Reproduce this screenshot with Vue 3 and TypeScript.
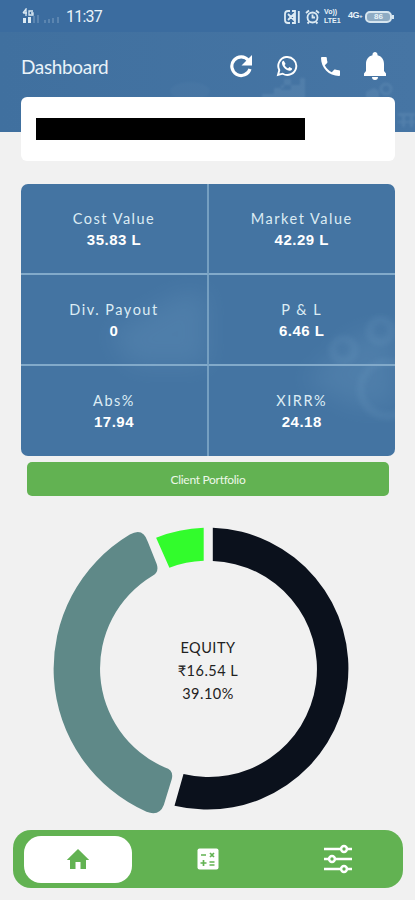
<script setup lang="ts">
interface Metric {
  label: string
  value: string
}

const metrics: Metric[] = [
  { label: 'Cost Value', value: '35.83 L' },
  { label: 'Market Value', value: '42.29 L' },
  { label: 'Div. Payout', value: '0' },
  { label: 'P & L', value: '6.46 L' },
  { label: 'Abs%', value: '17.94' },
  { label: 'XIRR%', value: '24.18' },
]
</script>

<template>
  <main class="screen">
    <header class="hero">
      <svg class="hero-art" viewBox="0 0 415 132" aria-hidden="true">
        <defs><filter id="hero-soft"><feGaussianBlur stdDeviation="1" /></filter></defs>
        <g fill="#83a9c9" opacity=".2" filter="url(#hero-soft)">
          <path d="M262 94h12v-6h10v-9h7v6h9v-7h5v26h-43zM281 85h10v5h-10z" fill-rule="evenodd" />
          <path d="M366 98v-6l8-4 5 3v7zM398 113h17v3h-17zM402 113h3v14h-3zM410 113h3v14h-3zM398 121h17v2h-17z" />
          <circle cx="386" cy="89" r="5" fill="none" stroke="#83a9c9" stroke-width="3" />
          <ellipse cx="190" cy="91" rx="20" ry="9" opacity=".3" />
        </g>
      </svg>
      <div class="status">
        <div class="status-left">
          <svg width="42" height="17" viewBox="0 0 42 17" fill="#dceaf3">
            <path d="M1 5l3-4v7M1 5h4M11 3H7v4h4V5H9" fill="none" stroke="#dceaf3" stroke-width="1.3" />
            <path d="M1 10h3v5H1zM6 9h3v6H6z" />
            <path d="M11 8h2v7h-2zM15 7h2v8h-2zM22 12h2v3h-2zM26 11h2v4h-2zM30 10h2v5h-2zM35 9h2v6h-2z" opacity=".2" />
          </svg>
          <span class="clock">11:37</span>
        </div>
        <div class="status-right">
          <svg width="17" height="16" viewBox="0 0 17 16" fill="none" stroke="#dceaf3" stroke-width="1.800">
            <path d="M6 2H4Q1 2 1 5v6q0 3 3 3h2M4 5l6 6V5L4 11M8 2h3v12H8M14.800 2v12" />
          </svg>
          <svg width="15" height="16" viewBox="0 0 15 16" fill="none" stroke="#dceaf3" stroke-width="1.800">
            <circle cx="7.500" cy="8.500" r="5" /><path d="M1 4l3-2.500M14 4l-3-2.500M7.500 5.500v3h2.500M4 13l-1.500 1.500M11 13l1.500 1.500" />
          </svg>
          <span class="volte"><span>Vo))</span><span>LTE1</span></span>
          <span class="network">4G<i>+</i></span>
          <span class="battery">86</span>
        </div>
      </div>
      <div class="toolbar">
        <h1>Dashboard</h1>
        <nav class="actions">
          <svg width="24" height="24" viewBox="0 0 24 24">
            <path d="M19.500 6.500A9.300 9.300 0 1 0 21 15" fill="none" stroke="#fff" stroke-width="3.200" /><path d="M23 1v10.500H12.500z" fill="#fff" />
          </svg>
          <svg width="22" height="22" viewBox="0 0 22 22">
            <path d="M2 20l1.300-4.900A9 9 0 1 1 6.700 18.700z" fill="none" stroke="#fff" stroke-width="1.900" />
            <path d="M7.800 5.700c-.9-.2-2 .8-1.900 2.400.1 3.600 4.500 7.900 8 7.700 1.400-.1 2.500-1.200 2.200-2.300l-2.700-1.400-1.400 1.300c-1.500-.6-2.800-1.800-3.400-3.300l1-1.200z" fill="#fff" />
          </svg>
          <svg width="19" height="19" viewBox="0 0 18 18" fill="#fff">
            <path d="M3.620 7.790c1.440 2.830 3.760 5.140 6.590 6.590l2.200-2.200c.27-.27.670-.36 1.020-.24 1.120.37 2.330.57 3.570.57.550 0 1 .450 1 1V17c0 .550-.450 1-1 1C7.610 18 0 10.390 0 1c0-.550.450-1 1-1h3.500c.550 0 1 .450 1 1 0 1.250.2 2.450.57 3.570.110.350.030.740-.250 1.020z" />
          </svg>
          <svg width="24" height="28" viewBox="0 0 24 28" fill="#fff">
            <path d="M12 28c1.900 0 3-1.100 3-3H9c0 1.900 1.100 3 3 3zM21 19v-7c0-4.800-2.500-7.900-6.500-8.800V2.500C14.500 1 13.300 0 12 0S9.500 1 9.500 2.500v.7C5.500 4.100 3 7.200 3 12v7L1 21.500V24h22v-2.500z" />
          </svg>
        </nav>
      </div>
    </header>

    <section class="client"><div class="redacted"></div></section>

    <section class="metrics">
      <svg class="metrics-art" viewBox="0 0 374 272" preserveAspectRatio="none" aria-hidden="true">
        <defs>
          <filter id="haze" x="-30%" y="-30%" width="160%" height="160%"><feGaussianBlur stdDeviation="12" /></filter>
          <filter id="soft"><feGaussianBlur stdDeviation="2.5" /></filter>
        </defs>
        <g fill="#78a5c9" opacity=".2" filter="url(#haze)">
          <path d="M88 150l70-40 28-2v74H112z" /><path d="M283 197l50-45 41-10v80h-40z" />
        </g>
        <g fill="none" stroke="#78a5c9" stroke-width="8" opacity=".14" filter="url(#soft)">
          <circle cx="367" cy="205" r="27" /><circle cx="360" cy="147" r="11" /><circle cx="323" cy="166" r="11" />
        </g>
      </svg>
      <div v-for="metric in metrics" :key="metric.label" class="metric">
        <span class="metric-label">{{ metric.label }}</span>
        <strong>{{ metric.value }}</strong>
      </div>
    </section>

    <button class="portfolio" type="button">Client Portfolio</button>

    <section class="chart">
      <svg viewBox="39.5 515 330 310" width="330" height="310" aria-hidden="true">
        <path fill="#0b111c" d="M212.300 527.700A141 141 0 1 1 174 805.700L183 774A108.050 108.050 0 1 0 212.300 561z" />
        <path fill="#32fc2c" d="M155.600 537.700A141 141 0 0 1 203.200 527.700V560.800A108 108 0 0 0 168.900 567.700z" />
        <path fill="#5f8988" d="M129.300 534.500Q142.500 527 147.300 541.700L156.200 564Q159 572 151.700 576A108 108 0 0 0 164.500 767.500Q173.500 770 171.300 779L163.300 805Q159 816.500 146 811.800A156.500 156.500 0 0 1 129.300 534.500z" />
      </svg>
      <div class="chart-label">
        <span>EQUITY</span><span>₹16.54 L</span><span>39.10%</span>
      </div>
    </section>

    <nav class="tabs">
      <div class="tab active">
        <svg width="24" height="22" viewBox="0 0 24 22"><path d="M12 1L.8 12H4v9h5.500v-7h5v7H20v-9h3.200z" fill="#62b252" /></svg>
      </div>
      <div class="tab">
        <svg width="22" height="22" viewBox="0 0 22 22">
          <rect x=".5" y=".5" width="21" height="21" rx="2" fill="#fff" />
          <path d="M4 7h5M6.500 12v6M3.500 15h6M12.500 14h5M12.500 17h5M13 5l4 4M17 5l-4 4" stroke="#62b252" stroke-width="1.700" />
        </svg>
      </div>
      <div class="tab">
        <svg width="28" height="30" viewBox="0 0 28 30" fill="#62b252" stroke="#fff" stroke-width="2.500">
          <path d="M0 5h28M0 15h28M0 25h28" />
          <circle cx="20" cy="5" r="2.900" /><circle cx="8" cy="15" r="2.900" /><circle cx="20" cy="25" r="2.900" />
        </svg>
      </div>
    </nav>
  </main>
</template>

<style>
body {
  background: #f1f1f1;
}
</style>

<style scoped>
* {
  box-sizing: border-box;
}
.screen {
  width: 415px;
  height: 900px;
  display: flex;
  flex-direction: column;
  overflow: hidden;
  background: #f1f1f1;
  font-family: Lato, "Liberation Sans", sans-serif;
}
.hero {
  position: relative;
  flex: none;
  height: 132px;
  background: linear-gradient(90deg, #40709f, #4675a4);
  color: #e9f3f9;
}
.hero-art {
  position: absolute;
  inset: 0;
}
.status {
  position: relative;
  display: flex;
  justify-content: space-between;
  align-items: center;
  height: 32px;
  padding: 1px 23px 0 22px;
  background: #3b6c9f;
}
.status-left,
.status-right {
  display: flex;
  align-items: center;
}
.clock {
  margin-left: 2px;
  font: 16px/20px Roboto, sans-serif;
  letter-spacing: -0.8px;
}
.status-right {
  gap: 4px;
}
.volte {
  display: flex;
  flex-direction: column;
  width: 20px;
  gap: 1px;
  font: bold 7px/8px "Liberation Sans", sans-serif;
}
.network {
  width: 13px;
  font: bold 9px/10px "Liberation Sans", sans-serif;
  letter-spacing: -0.5px;
  padding-bottom: 3px;
  white-space: nowrap;
}
.network i {
  font-size: 6px;
}
.battery {
  position: relative;
  width: 27px;
  height: 12px;
  border: 2px solid #d6e5ef;
  border-radius: 5px;
  background: #8eabc3;
  font: bold 8px/8px "Liberation Sans", sans-serif;
  text-align: center;
}
.battery::after {
  content: "";
  position: absolute;
  right: -4px;
  top: 2px;
  width: 2px;
  height: 4px;
  background: #d6e5ef;
}
.toolbar {
  position: relative;
  display: flex;
  justify-content: space-between;
  align-items: center;
  height: 66px;
  padding: 2px 28px 0 21px;
}
h1 {
  margin: 0;
  font-size: 19px;
  font-weight: 400;
  letter-spacing: -0.35px;
}
.actions {
  display: flex;
  align-items: center;
}
.actions svg + svg {
  margin-left: 23px;
}
.client {
  position: relative;
  flex: none;
  height: 64px;
  margin: -35px 20.5px 0;
  padding: 21px 15.5px;
  border-radius: 6px;
  background: #fff;
}
.redacted {
  width: 269px;
  height: 22px;
  background: #000;
}
.metrics {
  position: relative;
  flex: none;
  display: grid;
  grid-template-columns: 188px 1fr;
  grid-template-rows: 91px 91px 90px;
  height: 272px;
  margin: 23px 20.5px 0 21px;
  border-radius: 7px;
  overflow: hidden;
  background: #4474a2;
  color: #fff;
  text-align: center;
}
.metrics-art {
  position: absolute;
  width: 100%;
  height: 100%;
}
.metric {
  position: relative;
  display: flex;
  flex-direction: column;
  align-items: center;
  padding-top: 24px;
  border-bottom: 2px solid #82aaca;
}
.metric:nth-child(even) {
  border-right: 2px solid #759fc1;
}
.metric:nth-child(n + 6) {
  border-bottom: 0;
}
.metric-label {
  color: #dcecf4;
  font-size: 14.5px;
  line-height: 21px;
  letter-spacing: 1.5px;
}
strong {
  font: bold 15px/21px "Liberation Sans", sans-serif;
  letter-spacing: 0.5px;
}
.portfolio {
  flex: none;
  height: 34px;
  margin: 6px 26px 0 27px;
  padding: 1px 0 0;
  border: 0;
  border-radius: 5px;
  background: #62b252;
  color: #edf8e9;
  font: 12px Lato, sans-serif;
  letter-spacing: -0.3px;
}
.chart {
  flex: none;
  display: grid;
  width: 330px;
  height: 310px;
  margin: 19px 0 0 40px;
}
.chart svg,
.chart-label {
  grid-area: 1 / 1;
}
.chart-label {
  display: flex;
  flex-direction: column;
  align-items: center;
  padding: 121px 0 0 6px;
  color: #222;
  font-size: 14.5px;
  line-height: 23px;
  letter-spacing: 0.5px;
}
.tabs {
  flex: none;
  display: flex;
  align-items: center;
  height: 58px;
  margin: 5px 12px 0 13px;
  padding: 0 11px;
  border-radius: 18px;
  background: #62b252;
}
.tab {
  display: flex;
  align-items: center;
  justify-content: center;
  width: 108px;
  height: 47px;
}
.tab + .tab {
  margin-left: 22px;
}
.active {
  border-radius: 17px;
  background: #fff;
}
</style>
